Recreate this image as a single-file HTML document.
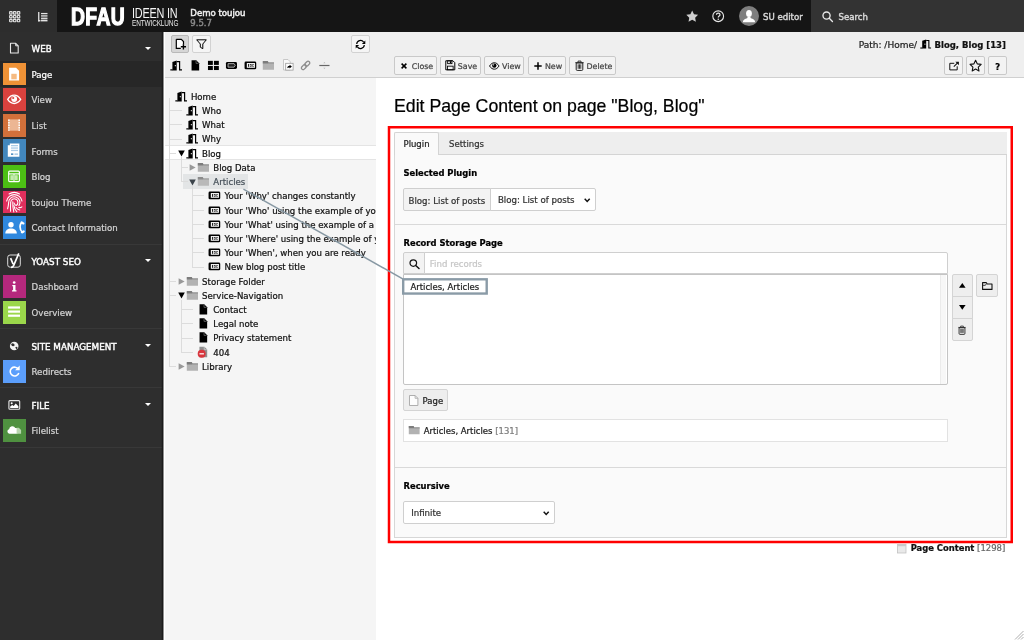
<!DOCTYPE html>
<html lang="en">
<head>
<meta charset="utf-8">
<title>Edit Page Content on page "Blog, Blog"</title>
<style>
*{box-sizing:border-box;margin:0;padding:0}
html,body{width:1024px;height:640px;overflow:hidden;background:#fff}
body{-webkit-text-stroke:0.22px;font-family:"DejaVu Sans","Liberation Sans",sans-serif;font-size:8.5px;color:#1a1a1a;position:relative;line-height:1}
#root{position:absolute;left:0;top:0;width:1024px;height:640px;overflow:hidden;will-change:transform}
.abs{position:absolute}
svg{display:block;position:absolute;overflow:visible}
b,.b{font-weight:bold;font-size:8.4px}
/* topbar */
#topbar{position:absolute;left:0;top:0;width:1024px;height:32px;background:#151515}
#tb-left{position:absolute;left:0;top:0;width:57px;height:32px;background:#2d2d2d}
#tb-search{position:absolute;left:811px;top:0;width:213px;height:32px;background:#333}
.t{position:absolute;white-space:nowrap;line-height:12px;height:12px}
/* module menu */
#menu{position:absolute;left:0;top:32px;width:162px;height:608px;background:#2e2e2e}
#menu-edge{position:absolute;left:162px;top:32px;width:2px;height:608px;background:#232323}
.mi{position:absolute;left:3px;width:22.9px;height:22.9px}
.ml{margin-top:.7px;font-size:8.65px;position:absolute;left:31.5px;color:#d4d4d4;white-space:nowrap;line-height:12px;height:12px}
.mh{margin-top:1.1px;position:absolute;left:31.5px;color:#fff;font-size:8.78px;-webkit-text-stroke:.4px;white-space:nowrap;line-height:12px;height:12px}
.sep{position:absolute;left:0;width:162px;height:1px;background:#383838}
.caret{position:absolute;left:145px;width:0;height:0;border-left:3.2px solid transparent;border-right:3.2px solid transparent;border-top:3.6px solid #fff}
/* tree */
#tree{position:absolute;left:164px;top:32px;width:212px;height:608px;background:#f5f5f5;overflow:hidden}
#tree-tb{position:absolute;left:0;top:0;width:212px;height:46px;background:#efefef;border-bottom:1px solid #d0d0d0}
.btn{position:absolute;border:1px solid #cfcfcf;background:#f3f3f3;border-radius:2px}
.tn{margin-top:.7px;font-size:8.58px;position:absolute;white-space:nowrap;line-height:12px;height:12px;color:#111}
/* content */
#doch{position:absolute;left:376px;top:32px;width:648px;height:46px;background:#efefef;border-bottom:1px solid #d0d0d0}
.dbtn{position:absolute;top:24px;height:19px;border:1px solid #c9c9c9;background:#f3f3f3;border-radius:2px;color:#444;font-size:7.9px}
.dbtn span{position:absolute;top:3.7px;line-height:12px;white-space:nowrap}
h1{position:absolute;left:394px;top:94px;font-family:"Liberation Sans",sans-serif;font-weight:normal;font-size:17.7px;line-height:24px;color:#000;white-space:nowrap}

#frame{position:absolute;left:387.7px;top:126px;width:625.3px;height:417.3px;border:2.5px solid #ff0000}
#tabbar{position:absolute;left:394.4px;top:132px;width:612.5px;height:22.5px;background:#eeeeee;border-bottom:1px solid #d4d4d4}
#tab1{position:absolute;left:394.4px;top:132px;width:44.2px;height:22.5px;background:#fafafa;border:1px solid #d4d4d4;border-bottom:none;border-radius:2px 2px 0 0}
#panel{position:absolute;left:394.4px;top:154.5px;width:612.5px;height:383px;background:#fafafa;border:1px solid #d7d7d7;border-top:none}
.hr{position:absolute;left:395.4px;width:610.5px;height:1px;background:#d9d9d9}
.lbl{margin-top:.6px;position:absolute;left:403.5px;font-weight:bold;font-size:8.4px;color:#000;white-space:nowrap;line-height:12px;height:12px}
.box{position:absolute;border:1px solid #cfcfcf;background:#fff}
.sbtn{position:absolute;border:1px solid #d4d4d4;background:#eeeeee}
</style>
</head>
<body>
<div id="root">
<!-- TOPBAR -->
<div id="topbar">
  <div id="tb-left">
    <svg style="left:8.8px;top:10.6px" width="11.4" height="11.4" viewBox="0 0 16 16" fill="none" stroke="#dedede" stroke-width="1.7">
      <rect x="0.9" y="0.9" width="3.4" height="3.4" rx="0.6"/><rect x="6.3" y="0.9" width="3.4" height="3.4" rx="0.6"/><rect x="11.7" y="0.9" width="3.4" height="3.4" rx="0.6"/>
      <rect x="0.9" y="6.3" width="3.4" height="3.4" rx="0.6"/><rect x="6.3" y="6.3" width="3.4" height="3.4" rx="0.6"/><rect x="11.7" y="6.3" width="3.4" height="3.4" rx="0.6"/>
      <rect x="0.9" y="11.7" width="3.4" height="3.4" rx="0.6"/><rect x="6.3" y="11.7" width="3.4" height="3.4" rx="0.6"/><rect x="11.7" y="11.7" width="3.4" height="3.4" rx="0.6"/>
    </svg>
    <svg style="left:37.8px;top:11.9px" width="9.6" height="9.4" viewBox="0 0 16 16" fill="#e4e4e4">
      <rect x="0" y="0" width="2.2" height="16"/><rect x="0" y="13.6" width="4" height="2.4"/>
      <rect x="5" y="1.6" width="11" height="2.2"/><rect x="5" y="5.6" width="11" height="2.2"/><rect x="5" y="9.6" width="11" height="2.2"/><rect x="5" y="13" width="11" height="3"/>
    </svg>
  </div>
  <!-- logo -->
  <div class="t" style="left:70.5px;top:6px;height:22px;line-height:22px;font-family:'Liberation Sans',sans-serif;font-weight:bold;font-size:24.6px;color:#fff;letter-spacing:0.5px;-webkit-text-stroke:1.3px #fff;transform-origin:0 50%;transform:scaleX(0.785)">DFAU</div>
  <div class="t" style="left:131.5px;top:6.4px;height:14px;line-height:14px;font-family:'Liberation Sans',sans-serif;font-size:14.6px;-webkit-text-stroke:0;color:#f4f4f4;letter-spacing:-0.3px;transform-origin:0 50%;transform:scaleX(0.745)">IDEEN IN</div>
  <div class="t" style="left:131.5px;top:19px;height:9px;line-height:9px;font-family:'Liberation Sans',sans-serif;font-size:8.6px;-webkit-text-stroke:0;color:#e6e6e6;letter-spacing:-0.2px;transform-origin:0 50%;transform:scaleX(0.755)">ENTWICKLUNG</div>
  <div class="t" style="left:190.3px;top:6.8px;font-size:8.56px;-webkit-text-stroke:.5px;color:#ededed">Demo toujou</div>
  <div class="t" style="left:190.3px;top:17px;font-size:8.5px;-webkit-text-stroke:.45px;color:#8a8a8a">9.5.7</div>
  <!-- right icons -->
  <svg style="left:685.8px;top:10px" width="12.4" height="12.4" viewBox="0 0 24 24" fill="#cfcfcf"><path d="M12 .8l3.5 7.3 7.9 1.1-5.7 5.6 1.4 8L12 19l-7.1 3.800 1.4-8L.6 9.200l7.900-1.100z"/></svg>
  <svg style="left:712.2px;top:10.4px" width="12.4" height="12.4" viewBox="0 0 24 24" fill="none" stroke="#e6e6e6" stroke-width="2.2"><circle cx="12" cy="12" r="10.4"/><path d="M8.600 9.400c0-2 1.500-3.300 3.500-3.300s3.400 1.300 3.400 3c0 2.600-3.400 2.600-3.400 5.200" stroke-width="2.400" fill="none"/><circle cx="12.100" cy="17.800" r="1.500" fill="#e6e6e6" stroke="none"/></svg>
  <div class="abs" style="left:739px;top:6px;width:20px;height:20px;border-radius:50%;background:#7e7e7e;overflow:hidden">
    <svg style="left:0;top:0" width="20" height="20" viewBox="0 0 20 20" fill="#fff"><ellipse cx="10" cy="7.600" rx="2.900" ry="3.500"/><path d="M3.800 16.200c.3-2.500 2.200-3.300 4.300-3.900l.6-1.300h2.600l.6 1.300c2.100.6 4 1.400 4.300 3.900z"/></svg>
  </div>
  <div class="t" style="left:763px;top:10.500px;color:#d6d6d6;font-size:8.580px;-webkit-text-stroke:.45px">SU editor</div>
  <div id="tb-search">
    <svg style="left:11px;top:11px" width="11" height="11" viewBox="0 0 16 16" fill="none" stroke="#e8e8e8" stroke-width="2"><circle cx="6.600" cy="6.600" r="5.200"/><path d="M10.600 10.600l4.600 4.600" stroke-linecap="round"/></svg>
    <div class="t" style="left:27.500px;top:10.500px;color:#d6d6d6;font-size:8.590px;-webkit-text-stroke:.45px">Search</div>
  </div>
</div>
<!-- MENU -->
<div id="menu">
<svg style="left:0;top:6.3px" width="30" height="20" viewBox="0 0 30 20"><path d="M10.500 5.300h5.200l2.500 2.500v7.200h-7.700z" fill="none" stroke="#e8e8e8" stroke-width="1.100" stroke-linejoin="round"/><path d="M15.700 5.300v2.500h2.500" fill="none" stroke="#e8e8e8" stroke-width="1"/></svg>
<div class="mh" style="top:10.1px">WEB</div>
<div class="caret" style="top:14.7px"></div>
<div class="abs" style="left:0;top:29.1px;width:162px;height:25.6px;background:#272727"></div>
<div class="mi" style="top:30.5px;background:#ef9236"><svg style="left:0;top:0" width="22.9" height="22.9" viewBox="0 0 22.9 22.9"><path d="M6.100 4.800h7l3 3v9.700h-10z" fill="#fff"/><rect x="8.300" y="10.800" width="5.400" height="5.500" fill="#f6bb82"/></svg></div>
<div class="ml" style="top:36.1px;color:#fff">Page</div>
<div class="mi" style="top:56.1px;background:#d9423e"><svg style="left:0;top:0" width="22.9" height="22.9" viewBox="0 0 22.9 22.9"><path d="M4.700 11.400c2-3.100 4.200-4.200 6.500-4.200s4.500 1.100 6.500 4.200c-2 3-4.200 4.100-6.500 4.100s-4.500-1.100-6.500-4.100z" fill="none" stroke="#fff" stroke-width="1.300"/><circle cx="11.200" cy="11" r="2.900" fill="#fff"/><circle cx="10.200" cy="10" r="1.100" fill="#d9423e"/></svg></div>
<div class="ml" style="top:61.7px">View</div>
<div class="mi" style="top:81.7px;background:#d2703a"><svg style="left:0;top:0" width="22.9" height="22.9" viewBox="0 0 22.9 22.9"><rect x="5.100" y="5.400" width="11.900" height="11.300" fill="#ecb693"/><path d="M5.900 5.400v11.300M16.200 5.400v11.300" stroke="#fff" stroke-width="1.500" stroke-dasharray="1.500 1"/></svg></div>
<div class="ml" style="top:87.3px">List</div>
<div class="mi" style="top:107.3px;background:#4287bd"><svg style="left:0;top:0" width="22.9" height="22.9" viewBox="0 0 22.9 22.9"><path d="M4.800 6.200h2v-1.700h9.600v13.200h-11.600z" fill="#fff"/><rect x="8" y="6" width="7" height="1.300" fill="#a9cbe6"/><rect x="8" y="8.400" width="7" height="1.300" fill="#a9cbe6"/><rect x="8" y="10.800" width="7" height="1.300" fill="#a9cbe6"/><rect x="8" y="14.400" width="2.300" height="1.500" fill="#4287bd"/><rect x="11.500" y="14.400" width="3.500" height="1.500" fill="#a9cbe6"/></svg></div>
<div class="ml" style="top:112.9px">Forms</div>
<div class="mi" style="top:132.9px;background:#4cbf14"><svg style="left:0;top:0" width="22.9" height="22.9" viewBox="0 0 22.9 22.9"><rect x="5.700" y="6.100" width="10.700" height="10.500" rx="1" fill="none" stroke="#fff" stroke-width="1.200"/><path d="M5.700 8.900h10.700" stroke="#fff" stroke-width="1.200"/><rect x="7.300" y="10.200" width="3" height="5" fill="#c4ecae"/><rect x="11.700" y="10.200" width="3" height="5" fill="#c4ecae"/><path d="M11 9v7.500" stroke="#fff" stroke-width="1"/></svg></div>
<div class="ml" style="top:138.5px">Blog</div>
<div class="mi" style="top:158.5px;background:#e02f5d"><svg style="left:0;top:0" width="22.9" height="22.9" viewBox="0 0 22.9 22.9"><g fill="none" stroke="#fff" stroke-width="1.050" stroke-linecap="round"><path d="M6.05 3.00A9.90 9.90 0 0 1 16.55 3.00"/><path d="M3.62 10.05A7.80 7.80 0 0 1 18.98 10.05"/><path d="M4.600 17.800Q5.42 14.90 5.62 11.90A5.70 5.70 0 1 1 15.97 14.67"/><path d="M7.600 20.200Q7.40 15.40 7.70 11.40A3.60 3.60 0 1 1 13.10 14.52Q11.50 14.00 11.00 12.00"/><path d="M10.800 21Q9.60 15.85 9.80 10.85"/><path d="M13.800 20.600Q11.300 18 10.900 14.600"/><path d="M16.800 19Q14.300 18.700 13 16.600"/><path d="M18.900 15.900Q17.500 17 15.800 16.500"/></g></svg></div>
<div class="ml" style="top:164.1px">toujou Theme</div>
<div class="mi" style="top:184.1px;background:#2f88de"><svg style="left:0;top:0" width="22.9" height="22.9" viewBox="0 0 22.9 22.9"><circle cx="8" cy="8.700" r="2.700" fill="#fff"/><path d="M2.300 17.400c0-3.400 2.400-5 5.700-5s5.800 1.600 5.800 5z" fill="#fff"/><path d="M19.200 6.600c-2.600 1.200-3.300 6.500.4 9.900" fill="none" stroke="#fff" stroke-width="1.700" stroke-linecap="round"/><path d="M18.600 6.500l1.800.9M18.900 16.200l1.800-.800" stroke="#fff" stroke-width="2.200" stroke-linecap="round"/></svg></div>
<div class="ml" style="top:189.7px">Contact Information</div>
<div class="sep" style="top:212.3px"></div>
<svg style="left:0;top:219.0px" width="30" height="20" viewBox="0 0 30 20"><rect x="7.700" y="4" width="12.600" height="12.200" rx="2.400" fill="none" stroke="#dcdcdc" stroke-width="1"/><path d="M10.600 7.200l2.500 5.900M18.800 2.400l-5.200 12.200c-.5 1.200-1.200 1.800-2.600 1.800" fill="none" stroke="#fff" stroke-width="1.700"/></svg>
<div class="mh" style="top:222.8px">YOAST SEO</div>
<div class="caret" style="top:227.4px"></div>
<div class="mi" style="top:243.1px;background:#b5287d"><svg style="left:0;top:0" width="22.9" height="22.9" viewBox="0 0 22.9 22.9"><circle cx="11.200" cy="7.500" r="1.350" fill="#fff"/><path d="M9.300 10h3.200v5.300h1v1.300h-4.500v-1.300h1.100v-4h-.8z" fill="#fff"/></svg></div>
<div class="ml" style="top:248.7px">Dashboard</div>
<div class="mi" style="top:268.9px;background:#9bd74b"><svg style="left:0;top:0" width="22.9" height="22.9" viewBox="0 0 22.9 22.9"><rect x="5.100" y="5.400" width="11.900" height="2.200" fill="#fff"/><rect x="5.100" y="9.500" width="11.900" height="2.200" fill="#fff"/><rect x="5.100" y="13.600" width="11.900" height="2.200" fill="#fff"/></svg></div>
<div class="ml" style="top:274.5px">Overview</div>
<div class="sep" style="top:296px"></div>
<svg style="left:0;top:304.0px" width="30" height="20" viewBox="0 0 30 20"><circle cx="14.200" cy="10" r="4.300" fill="#f2f2f2"/><path d="M12 7.200l2 .6.800 1.500-1.300 1-1.500-.3-.9-1.500zM15.200 11.300l1.700-.6.700 1-1.200 1.800z" fill="#2e2e2e"/></svg>
<div class="mh" style="top:307.8px">SITE MANAGEMENT</div>
<div class="caret" style="top:312.4px"></div>
<div class="mi" style="top:328.1px;background:#5b9efb"><svg style="left:0;top:0" width="22.9" height="22.9" viewBox="0 0 22.9 22.9"><path d="M15.400 9.300a4.400 4.400 0 1 0 .4 3.600" fill="none" stroke="#fff" stroke-width="1.600"/><path d="M16.700 5.600v4.600h-4.600z" fill="#fff"/></svg></div>
<div class="ml" style="top:333.7px">Redirects</div>
<div class="sep" style="top:355.4px"></div>
<svg style="left:0;top:362.8px" width="30" height="20" viewBox="0 0 30 20"><rect x="8.900" y="5.600" width="10.800" height="8.600" rx="1" fill="none" stroke="#e8e8e8" stroke-width="1.100"/><circle cx="11.700" cy="8.300" r="1" fill="#fff"/><path d="M10.200 13v-1.600l2-1.500 1.500 1 2-2.500 2.700 2.800v1.800z" fill="#fff"/></svg>
<div class="mh" style="top:366.6px">FILE</div>
<div class="caret" style="top:371.2px"></div>
<div class="mi" style="top:387.1px;background:#4f9140"><svg style="left:0;top:0" width="22.9" height="22.9" viewBox="0 0 22.9 22.9"><path d="M6.400 14.700a2.300 2.300 0 0 1-.3-4.500 3.300 3.300 0 0 1 6.200-1.200 2.900 2.900 0 0 1 1.200 5.700z" fill="#fff"/><path d="M13.600 8.800h2.200l2.300 2.300v3.600h-4.500z" fill="#b7d6ae"/></svg></div>
<div class="ml" style="top:392.7px">Filelist</div>
<div class="sep" style="top:415.2px"></div>
</div>
<div id="menu-edge"></div>
<!-- TREE -->
<div id="tree">
<div id="tree-tb">
<div class="btn" style="left:7.0px;top:3.1px;width:17.9px;height:17.9px;background:#d6d6d6;border-color:#b9b9b9"></div>
<svg style="left:10.6px;top:6.4px" width="12" height="12" viewBox="0 0 12 12"><path d="M1.300 1.300h5l2.200 2.200v6.900h-7.200z" fill="#fff"/><path d="M1.300 1.300h5l2.200 2.200v3M5.800 10.400h-4.500v-9.100" fill="none" stroke="#000" stroke-width="1.200"/><path d="M8.400 6.200v5.200M5.800 8.800h5.200" stroke="#000" stroke-width="1.400"/></svg>
<div class="btn" style="left:28.3px;top:3.1px;width:18.7px;height:17.9px;background:#f5f5f5;border-color:#d2d2d2"></div>
<svg style="left:31.9px;top:6.6px" width="11" height="11" viewBox="0 0 11 11"><path d="M.7 .800h9.600l-3.500 4.200v4.700l-2.500-1.500v-3.200z" fill="none" stroke="#000" stroke-width="1" stroke-linejoin="round"/></svg>
<div class="btn" style="left:187.3px;top:3.1px;width:18.3px;height:17.9px;background:#f5f5f5;border-color:#d2d2d2"></div>
<svg style="left:191.0px;top:6.6px" width="11" height="11" viewBox="0 0 11 11"><path d="M1.700 5a3.800 3.800 0 0 1 6.900-1.900M9.300 6a3.800 3.800 0 0 1-6.900 1.900" fill="none" stroke="#000" stroke-width="1.200"/><path d="M10.300 1.600v3.400h-3.400zM.7 9.400v-3.400h3.400z" fill="#000"/></svg>
<svg style="left:6.3px;top:27.1px" width="12.800" height="12.800" viewBox="0 0 16 16"><path d="M3 3.700l5.400-1.800v12.400h-5.400z" fill="#000"/><circle cx="6.700" cy="8.400" r=".8" fill="#e8e8e8"/><path d="M8.400 3.300h3.600v10.300h3" fill="none" stroke="#000" stroke-width="1.500"/><path d="M.4 13.600h3" stroke="#000" stroke-width="1.500"/></svg>
<svg style="left:24.6px;top:27.1px" width="12.800" height="12.800" viewBox="0 0 16 16"><path d="M3.200 1.600h5.900l3.600 3.600v9.100h-9.500z" fill="#000"/><path d="M8.800 2.300v3.200h3.200" fill="none" stroke="#777" stroke-width=".9"/></svg>
<svg style="left:42.9px;top:27.1px" width="12.800" height="12.800" viewBox="0 0 16 16"><rect x="1.200" y="2.300" width="6.100" height="5.100" fill="#000"/><rect x="8.700" y="2.300" width="6.100" height="5.100" fill="#000"/><rect x="1.200" y="8.700" width="6.100" height="5.100" fill="#000"/><rect x="8.700" y="8.700" width="6.100" height="5.100" fill="#000"/></svg>
<svg style="left:61.3px;top:27.1px" width="12.800" height="12.800" viewBox="0 0 16 16"><rect x="1.200" y="3.600" width="13.800" height="8.800" rx="1.800" fill="#000"/><path d="M3.800 5.800h7.600l1.400 2.200-1.400 2.200h-7.600z" fill="#222" stroke="#dcdcdc" stroke-width=".9"/></svg>
<svg style="left:79.9px;top:27.1px" width="12.800" height="12.800" viewBox="0 0 16 16"><rect x=".7" y="3.200" width="14.600" height="9.600" rx="1.700" fill="#000"/><rect x="3.500" y="5" width="10.200" height="6" fill="#f4f4f4"/><path d="M5.700 6.200v3.600M7.300 7h1.400M7.300 9h1.400M10 6.200v3.600M11.600 6.400v1M11.600 8.600v1" stroke="#000" stroke-width="1.100"/></svg>
<svg style="left:98.3px;top:27.1px" width="12.800" height="12.800" viewBox="0 0 16 16"><path d="M1 2.700h6l.9 1.500h7.100v9.100h-14z" fill="#b2b2b2"/><path d="M1 2.500h6.200l.9 1.700v1.300h-7.100z" fill="#7c7c7c"/><path d="M8 4.200h7v1.800h-7z" fill="#9c9c9c"/></svg>
<svg style="left:118.6px;top:27.3px" width="11" height="12" viewBox="0 0 11 12"><path d="M.5 .500h4.500l2.300 2.300v8.200h-6.800z" fill="#fafafa" stroke="#bdbdbd" stroke-width=".8"/><rect x="2.700" y="4.300" width="7.400" height="6.800" fill="#fff" stroke="#9a9a9a" stroke-width=".8"/><path d="M4.300 9.300c0-1.700.9-2.500 2.300-2.500v-1.100l2.300 1.900-2.300 1.900v-1.100c-1 0-1.700.2-2.300.9z" fill="#000"/></svg>
<svg style="left:136.4px;top:27.8px" width="11" height="11" viewBox="0 0 11 11"><g fill="none" stroke="#8c8c8c" stroke-width="1.300"><rect x="-2.400" y="-1.700" width="5.600" height="3.400" rx="1.700" transform="translate(3.600,7.400) rotate(-45)"/><rect x="-2.400" y="-1.700" width="5.600" height="3.400" rx="1.700" transform="translate(7,4) rotate(-45)"/></g></svg>
<svg style="left:154.9px;top:27.8px" width="11" height="11" viewBox="0 0 11 11"><path d="M.3 5.500h10.200" stroke="#666" stroke-width="1.200"/><path d="M4.300 3.300l1.100-1.300 1.100 1.300zM4.300 7.700l1.100 1.300 1.100-1.300z" fill="#b5b5b5"/></svg>
</div>
<div class="abs" style="left:0;top:113px;width:212px;height:15px;background:#fff;border-top:1px solid #e4e4e4;border-bottom:1px solid #e4e4e4"></div>
<div class="abs" style="left:19.4px;top:142.1px;width:64.600px;height:15px;background:#e3e5e6"></div>
<div class="abs" style="left:5.3px;top:66.4px;width:1px;height:268.7px;background:#dcdcdc"></div>
<div class="abs" style="left:5.3px;top:78.1px;width:12.3px;height:1px;background:#dcdcdc"></div>
<div class="abs" style="left:5.3px;top:92.3px;width:12.3px;height:1px;background:#dcdcdc"></div>
<div class="abs" style="left:5.3px;top:106.6px;width:12.3px;height:1px;background:#dcdcdc"></div>
<div class="abs" style="left:5.3px;top:120.8px;width:7.0px;height:1px;background:#dcdcdc"></div>
<div class="abs" style="left:5.3px;top:248.8px;width:7.0px;height:1px;background:#dcdcdc"></div>
<div class="abs" style="left:5.3px;top:263.0px;width:7.0px;height:1px;background:#dcdcdc"></div>
<div class="abs" style="left:5.3px;top:334.1px;width:7.0px;height:1px;background:#dcdcdc"></div>
<div class="abs" style="left:16.9px;top:125.3px;width:1px;height:24.9px;background:#dcdcdc"></div>
<div class="abs" style="left:16.9px;top:135.0px;width:7.0px;height:1px;background:#dcdcdc"></div>
<div class="abs" style="left:16.9px;top:149.2px;width:7.0px;height:1px;background:#dcdcdc"></div>
<div class="abs" style="left:16.9px;top:267.5px;width:1px;height:53.4px;background:#dcdcdc"></div>
<div class="abs" style="left:16.9px;top:277.2px;width:12.3px;height:1px;background:#dcdcdc"></div>
<div class="abs" style="left:16.9px;top:291.4px;width:12.3px;height:1px;background:#dcdcdc"></div>
<div class="abs" style="left:16.9px;top:305.6px;width:12.3px;height:1px;background:#dcdcdc"></div>
<div class="abs" style="left:16.9px;top:319.9px;width:12.3px;height:1px;background:#dcdcdc"></div>
<div class="abs" style="left:28.1px;top:153.7px;width:1px;height:81.8px;background:#dcdcdc"></div>
<div class="abs" style="left:28.1px;top:163.4px;width:12.3px;height:1px;background:#dcdcdc"></div>
<div class="abs" style="left:28.1px;top:177.7px;width:12.3px;height:1px;background:#dcdcdc"></div>
<div class="abs" style="left:28.1px;top:191.9px;width:12.3px;height:1px;background:#dcdcdc"></div>
<div class="abs" style="left:28.1px;top:206.1px;width:12.3px;height:1px;background:#dcdcdc"></div>
<div class="abs" style="left:28.1px;top:220.3px;width:12.3px;height:1px;background:#dcdcdc"></div>
<div class="abs" style="left:28.1px;top:234.5px;width:12.3px;height:1px;background:#dcdcdc"></div>
<svg style="left:11.2px;top:57.7px" width="12.800" height="12.800" viewBox="0 0 16 16"><path d="M3 3.700l5.400-1.800v12.400h-5.400z" fill="#000"/><circle cx="6.700" cy="8.400" r=".8" fill="#e8e8e8"/><path d="M8.400 3.300h3.600v10.300h3" fill="none" stroke="#000" stroke-width="1.500"/><path d="M.4 13.600h3" stroke="#000" stroke-width="1.500"/></svg>
<div class="tn" style="left:26.9px;top:58.1px">Home</div>
<svg style="left:21.6px;top:71.9px" width="12.800" height="12.800" viewBox="0 0 16 16"><path d="M3 3.700l5.400-1.800v12.400h-5.400z" fill="#000"/><circle cx="6.700" cy="8.400" r=".8" fill="#e8e8e8"/><path d="M8.400 3.300h3.600v10.300h3" fill="none" stroke="#000" stroke-width="1.500"/><path d="M.4 13.600h3" stroke="#000" stroke-width="1.500"/></svg>
<div class="tn" style="left:38.1px;top:72.3px">Who</div>
<svg style="left:21.6px;top:86.1px" width="12.800" height="12.800" viewBox="0 0 16 16"><path d="M3 3.700l5.400-1.800v12.400h-5.400z" fill="#000"/><circle cx="6.700" cy="8.400" r=".8" fill="#e8e8e8"/><path d="M8.400 3.300h3.600v10.300h3" fill="none" stroke="#000" stroke-width="1.500"/><path d="M.4 13.600h3" stroke="#000" stroke-width="1.500"/></svg>
<div class="tn" style="left:38.1px;top:86.5px">What</div>
<svg style="left:21.6px;top:100.4px" width="12.800" height="12.800" viewBox="0 0 16 16"><path d="M3 3.700l5.400-1.800v12.400h-5.400z" fill="#000"/><circle cx="6.700" cy="8.400" r=".8" fill="#e8e8e8"/><path d="M8.400 3.300h3.600v10.300h3" fill="none" stroke="#000" stroke-width="1.500"/><path d="M.4 13.600h3" stroke="#000" stroke-width="1.500"/></svg>
<div class="tn" style="left:38.1px;top:100.8px">Why</div>
<svg style="left:13.5px;top:118.1px" width="7" height="7" viewBox="0 0 7 7"><path d="M.2 .600h6.600l-3.300 6z" fill="#000"/></svg>
<svg style="left:21.6px;top:114.6px" width="12.800" height="12.800" viewBox="0 0 16 16"><path d="M3 3.700l5.400-1.800v12.400h-5.400z" fill="#000"/><circle cx="6.700" cy="8.400" r=".8" fill="#e8e8e8"/><path d="M8.400 3.300h3.600v10.300h3" fill="none" stroke="#000" stroke-width="1.500"/><path d="M.4 13.600h3" stroke="#000" stroke-width="1.500"/></svg>
<div class="tn" style="left:38.1px;top:115.0px">Blog</div>
<svg style="left:25.1px;top:132.0px" width="7" height="7" viewBox="0 0 7 7"><path d="M.6 .200v6.600l6-3.300z" fill="#999"/></svg>
<svg style="left:32.8px;top:128.8px" width="12.800" height="12.800" viewBox="0 0 16 16"><path d="M1 2.700h6l.9 1.500h7.100v9.100h-14z" fill="#b2b2b2"/><path d="M1 2.500h6.200l.9 1.700v1.300h-7.100z" fill="#7c7c7c"/><path d="M8 4.200h7v1.800h-7z" fill="#9c9c9c"/></svg>
<div class="tn" style="left:49.3px;top:129.2px">Blog Data</div>
<svg style="left:24.7px;top:146.5px" width="7" height="7" viewBox="0 0 7 7"><path d="M.2 .600h6.600l-3.300 6z" fill="#3c444b"/></svg>
<svg style="left:32.8px;top:143.0px" width="12.800" height="12.800" opacity=".85" viewBox="0 0 16 16"><path d="M1 2.700h6l.9 1.500h7.100v9.100h-14z" fill="#b2b2b2"/><path d="M1 2.500h6.200l.9 1.700v1.300h-7.100z" fill="#7c7c7c"/><path d="M8 4.200h7v1.800h-7z" fill="#9c9c9c"/></svg>
<div class="tn" style="left:49.3px;top:143.4px;color:#48525b">Articles</div>
<svg style="left:44.0px;top:157.2px" width="12.800" height="12.800" viewBox="0 0 16 16"><rect x=".7" y="3.200" width="14.600" height="9.600" rx="1.700" fill="#000"/><rect x="3.500" y="5" width="10.200" height="6" fill="#f4f4f4"/><path d="M5.700 6.200v3.600M7.300 7h1.400M7.300 9h1.400M10 6.200v3.600M11.600 6.400v1M11.600 8.600v1" stroke="#000" stroke-width="1.100"/></svg>
<div class="tn" style="left:60.5px;top:157.6px">Your 'Why' changes constantly</div>
<svg style="left:44.0px;top:171.5px" width="12.800" height="12.800" viewBox="0 0 16 16"><rect x=".7" y="3.200" width="14.600" height="9.600" rx="1.700" fill="#000"/><rect x="3.500" y="5" width="10.200" height="6" fill="#f4f4f4"/><path d="M5.700 6.200v3.600M7.300 7h1.400M7.300 9h1.400M10 6.200v3.600M11.600 6.400v1M11.600 8.600v1" stroke="#000" stroke-width="1.100"/></svg>
<div class="tn" style="left:60.5px;top:171.9px">Your 'Who' using the example of your</div>
<svg style="left:44.0px;top:185.7px" width="12.800" height="12.800" viewBox="0 0 16 16"><rect x=".7" y="3.200" width="14.600" height="9.600" rx="1.700" fill="#000"/><rect x="3.500" y="5" width="10.200" height="6" fill="#f4f4f4"/><path d="M5.700 6.200v3.600M7.300 7h1.400M7.300 9h1.400M10 6.200v3.600M11.600 6.400v1M11.600 8.600v1" stroke="#000" stroke-width="1.100"/></svg>
<div class="tn" style="left:60.5px;top:186.1px">Your 'What' using the example of a</div>
<svg style="left:44.0px;top:199.9px" width="12.800" height="12.800" viewBox="0 0 16 16"><rect x=".7" y="3.200" width="14.600" height="9.600" rx="1.700" fill="#000"/><rect x="3.500" y="5" width="10.200" height="6" fill="#f4f4f4"/><path d="M5.700 6.200v3.600M7.300 7h1.400M7.300 9h1.400M10 6.200v3.600M11.600 6.400v1M11.600 8.600v1" stroke="#000" stroke-width="1.100"/></svg>
<div class="tn" style="left:60.5px;top:200.3px">Your 'Where' using the example of your</div>
<svg style="left:44.0px;top:214.1px" width="12.800" height="12.800" viewBox="0 0 16 16"><rect x=".7" y="3.200" width="14.600" height="9.600" rx="1.700" fill="#000"/><rect x="3.500" y="5" width="10.200" height="6" fill="#f4f4f4"/><path d="M5.700 6.200v3.600M7.300 7h1.400M7.300 9h1.400M10 6.200v3.600M11.600 6.400v1M11.600 8.600v1" stroke="#000" stroke-width="1.100"/></svg>
<div class="tn" style="left:60.5px;top:214.5px">Your 'When', when you are ready</div>
<svg style="left:44.0px;top:228.3px" width="12.800" height="12.800" viewBox="0 0 16 16"><rect x=".7" y="3.200" width="14.600" height="9.600" rx="1.700" fill="#000"/><rect x="3.500" y="5" width="10.200" height="6" fill="#f4f4f4"/><path d="M5.700 6.200v3.600M7.300 7h1.400M7.300 9h1.400M10 6.200v3.600M11.600 6.400v1M11.600 8.600v1" stroke="#000" stroke-width="1.100"/></svg>
<div class="tn" style="left:60.5px;top:228.7px">New blog post title</div>
<svg style="left:13.9px;top:245.8px" width="7" height="7" viewBox="0 0 7 7"><path d="M.6 .200v6.600l6-3.300z" fill="#999"/></svg>
<svg style="left:21.6px;top:242.6px" width="12.800" height="12.800" viewBox="0 0 16 16"><path d="M1 2.700h6l.9 1.500h7.100v9.100h-14z" fill="#b2b2b2"/><path d="M1 2.500h6.200l.9 1.700v1.300h-7.100z" fill="#7c7c7c"/><path d="M8 4.200h7v1.800h-7z" fill="#9c9c9c"/></svg>
<div class="tn" style="left:38.1px;top:243.0px">Storage Folder</div>
<svg style="left:13.5px;top:260.3px" width="7" height="7" viewBox="0 0 7 7"><path d="M.2 .600h6.600l-3.300 6z" fill="#000"/></svg>
<svg style="left:21.6px;top:256.8px" width="12.800" height="12.800" viewBox="0 0 16 16"><path d="M1 2.700h6l.9 1.500h7.100v9.100h-14z" fill="#b2b2b2"/><path d="M1 2.500h6.200l.9 1.700v1.300h-7.100z" fill="#7c7c7c"/><path d="M8 4.200h7v1.800h-7z" fill="#9c9c9c"/></svg>
<div class="tn" style="left:38.1px;top:257.2px">Service-Navigation</div>
<svg style="left:32.8px;top:271.0px" width="12.800" height="12.800" viewBox="0 0 16 16"><path d="M3.200 1.600h5.900l3.600 3.600v9.100h-9.500z" fill="#000"/><path d="M8.800 2.300v3.200h3.200" fill="none" stroke="#777" stroke-width=".9"/></svg>
<div class="tn" style="left:49.3px;top:271.4px">Contact</div>
<svg style="left:32.8px;top:285.2px" width="12.800" height="12.800" viewBox="0 0 16 16"><path d="M3.200 1.600h5.900l3.600 3.600v9.100h-9.500z" fill="#000"/><path d="M8.800 2.300v3.200h3.200" fill="none" stroke="#777" stroke-width=".9"/></svg>
<div class="tn" style="left:49.3px;top:285.6px">Legal note</div>
<svg style="left:32.8px;top:299.4px" width="12.800" height="12.800" viewBox="0 0 16 16"><path d="M3.200 1.600h5.900l3.600 3.600v9.100h-9.500z" fill="#000"/><path d="M8.800 2.300v3.200h3.200" fill="none" stroke="#777" stroke-width=".9"/></svg>
<div class="tn" style="left:49.3px;top:299.8px">Privacy statement</div>
<svg style="left:32.1px;top:313.8px" width="12.800" height="12.800" viewBox="0 0 16 16"><path d="M4.300 .800h6.200l3.500 3.500v9.700h-9.700z" fill="#8f8f8f"/><path d="M10.300 1.200v3.300h3.300" fill="none" stroke="#cfcfcf" stroke-width=".9"/><circle cx="7.100" cy="9.700" r="5" fill="#d8363d"/><rect x="4.300" y="8.900" width="5.600" height="1.700" fill="#fbe9ea"/></svg>
<div class="tn" style="left:49.3px;top:314.1px">404</div>
<svg style="left:13.9px;top:331.1px" width="7" height="7" viewBox="0 0 7 7"><path d="M.6 .200v6.600l6-3.300z" fill="#999"/></svg>
<svg style="left:21.6px;top:327.9px" width="12.800" height="12.800" viewBox="0 0 16 16"><path d="M1 2.700h6l.9 1.500h7.100v9.100h-14z" fill="#b2b2b2"/><path d="M1 2.500h6.200l.9 1.700v1.300h-7.100z" fill="#7c7c7c"/><path d="M8 4.200h7v1.800h-7z" fill="#9c9c9c"/></svg>
<div class="tn" style="left:38.1px;top:328.3px">Library</div>
</div>
<svg style="left:0;top:32px" width="170" height="608"><rect x="161.800" y="0" width="1.700" height="608" fill="#1b1b1b"/><rect x="163.500" y="0" width="1.600" height="608" fill="#ffffff"/></svg>
<!-- CONTENT -->
<div id="doch">
<div class="dbtn" style="left:18.2px;width:43.0px"><svg style="left:5.600px;top:5.700px" width="6" height="6" viewBox="0 0 6 6"><path d="M.6 .600l4.800 4.800M5.400 .600l-4.800 4.800" stroke="#000" stroke-width="1.500"/></svg><span style="left:16.5px">Close</span></div>
<div class="dbtn" style="left:64.2px;width:41.0px"><svg style="left:3.700px;top:3.200px" width="10.600" height="10.600" viewBox="0 0 16 16"><path d="M1.200 1.200h10.800l2.800 2.800v10.800h-13.600z" fill="none" stroke="#000" stroke-width="1.500" stroke-linejoin="round"/><rect x="4" y="1.200" width="6.500" height="4.300" fill="none" stroke="#000" stroke-width="1.300"/><rect x="7.300" y="1.800" width="2" height="2.800" fill="#000"/><rect x="3.700" y="9.300" width="8.600" height="5.500" fill="none" stroke="#000" stroke-width="1.300"/></svg><span style="left:16.6px">Save</span></div>
<div class="dbtn" style="left:108.4px;width:40.0px"><svg style="left:3.700px;top:4.500px" width="10.600" height="8" viewBox="0 0 16 12"><path d="M.8 6c2.200-3.600 4.700-4.900 7.200-4.900s5 1.300 7.200 4.900c-2.200 3.500-4.700 4.800-7.200 4.800s-5-1.300-7.200-4.800z" fill="none" stroke="#000" stroke-width="1.400"/><circle cx="8" cy="5.400" r="3.300" fill="#000"/><circle cx="6.800" cy="4.300" r="1.100" fill="#f3f3f3"/></svg><span style="left:16.6px">View</span></div>
<div class="dbtn" style="left:151.8px;width:38.2px"><svg style="left:5px;top:4.700px" width="8" height="8" viewBox="0 0 8 8"><path d="M4 .300v7.400M.3 4h7.400" stroke="#000" stroke-width="1.500"/></svg><span style="left:16.1px">New</span></div>
<div class="dbtn" style="left:193.1px;width:47.2px"><svg style="left:4.500px;top:3.300px" width="9" height="11" viewBox="0 0 9 11"><path d="M1.200 3h6.600v6.400a1 1 0 0 1-1 1h-4.600a1 1 0 0 1-1-1z" fill="none" stroke="#222" stroke-width="1"/><path d="M.3 2.600h8.400M3 2.400v-1.300h3v1.300M3.200 4.300v4.500M4.500 4.300v4.500M5.800 4.300v4.500" fill="none" stroke="#222" stroke-width=".9"/></svg><span style="left:16.4px">Delete</span></div>
<div class="t" style="left:482.7px;top:6.5px;font-size:9px;color:#222">Path: /Home/</div>
<svg style="left:543.8px;top:6.3px" width="11.800" height="11.800" viewBox="0 0 16 16"><path d="M3 3.700l5.400-1.800v12.400h-5.400z" fill="#000"/><circle cx="6.700" cy="8.400" r=".8" fill="#e8e8e8"/><path d="M8.400 3.300h3.600v10.300h3" fill="none" stroke="#000" stroke-width="1.500"/><path d="M.4 13.600h3" stroke="#000" stroke-width="1.500"/></svg>
<div class="t" style="left:558.5px;top:6.5px;font-weight:bold;font-size:8.500px;color:#111">Blog, Blog [13]</div>
<div class="dbtn" style="left:568.2px;width:19.1px"><svg style="left:3.400px;top:3.600px" width="10.500" height="10" viewBox="0 0 10.500 10"><path d="M5.300 2.300h-4.500v6.600h7.400v-3.600" fill="none" stroke="#111" stroke-width="1"/><path d="M4.800 5.700l4.400-4.400" stroke="#111" stroke-width="1.100"/><path d="M6.300 .700h3.600v3.600z" fill="#111"/></svg></div>
<div class="dbtn" style="left:590.2px;width:19.3px"><svg style="left:2.300px;top:2.200px" width="13.200" height="13.200" viewBox="0 0 24 24"><path d="M12 2.200l3 6.600 7.100.9-5.200 5 1.300 7.100-6.200-3.500-6.200 3.500 1.300-7.100-5.200-5 7.100-.900z" fill="none" stroke="#111" stroke-width="2" stroke-linejoin="round"/></svg></div>
<div class="dbtn" style="left:612.4px;width:18.9px"><span style="left:5.900px;font-weight:bold;font-size:8.400px;color:#000">?</span></div>
</div>
<h1>Edit Page Content on page "Blog, Blog"</h1>
<svg style="left:0;top:0" width="1024" height="640"><rect x="389" y="127.250" width="622.750" height="414.750" fill="none" stroke="#ff0000" stroke-width="2.500"/></svg>
<div id="tabbar"></div>
<div id="tab1"></div>
<div id="panel"></div>
<div class="t" style="left:403.5px;top:138.2px;color:#222">Plugin</div>
<div class="t" style="left:449.1px;top:138.2px;color:#333">Settings</div>
<div class="lbl" style="top:166.400px">Selected Plugin</div>
<div class="box" style="left:403px;top:188px;width:87.900px;height:22.700px;background:#f3f3f3;border-radius:2px 0 0 2px"></div>
<div class="box" style="left:489.900px;top:188px;width:105.800px;height:22.700px;border-radius:0 2px 2px 0"></div>
<div class="t" style="left:408.500px;top:195px;font-size:8.650px;color:#333">Blog: List of posts</div>
<div class="t" style="left:497.900px;top:194.200px;font-size:8.650px;color:#333">Blog: List of posts</div>
<svg style="left:583.600px;top:197.600px" width="6.400" height="4.600" viewBox="0 0 6.400 4.600"><path d="M.7 .800l2.500 2.600 2.500-2.600" fill="none" stroke="#111" stroke-width="1.500"/></svg>
<div class="hr" style="top:223.700px"></div>
<div class="lbl" style="top:236.100px">Record Storage Page</div>
<div class="box" style="left:403px;top:251.900px;width:22px;height:22.100px;background:#f3f3f3;border-radius:2px 0 0 0"></div>
<div class="box" style="left:424px;top:251.900px;width:523.500px;height:22.100px;border-radius:0 2px 0 0"></div>
<svg style="left:409px;top:258.600px" width="11" height="10" viewBox="0 0 11 10"><circle cx="4.300" cy="4.100" r="3.300" fill="none" stroke="#111" stroke-width="1.200"/><path d="M6.700 6.500l3.300 3" stroke="#111" stroke-width="1.500" stroke-linecap="round"/></svg>
<div class="t" style="left:429.800px;top:257.500px;font-size:8.600px;color:#c6c6c6">Find records</div>
<div class="box" style="left:403px;top:273.600px;width:544.500px;height:111.200px;border-color:#c4c4c4;border-radius:0 0 2px 2px"></div>
<div class="abs" style="left:939.800px;top:274.600px;width:6.700px;height:109.200px;background:#f7f7f7;border-left:1px solid #ebebeb"></div>
<svg style="left:0;top:0" width="1024" height="640"><rect x="403.200" y="279.300" width="83.500" height="14.250" fill="#fff" stroke="#8a9ba7" stroke-width="2.400"/></svg>
<div class="t" style="left:410.400px;top:280.700px;color:#222">Articles, Articles</div>
<svg style="left:0;top:0" width="1024" height="640"><path d="M243.400 189.100L402.700 278.800" stroke="#8798a3" stroke-width="1.500" fill="none"/></svg>
<div class="sbtn" style="left:951.600px;top:274.400px;width:21px;height:22.400px;border-radius:2px 2px 0 0"></div>
<div class="sbtn" style="left:951.600px;top:296.300px;width:21px;height:22.400px"></div>
<div class="sbtn" style="left:951.600px;top:318.200px;width:21px;height:22.800px;border-radius:0 0 2px 2px"></div>
<div class="sbtn" style="left:976.300px;top:274.400px;width:21.400px;height:22.500px;border-radius:2px"></div>
<svg style="left:958.900px;top:283.300px" width="6.600" height="4.800" viewBox="0 0 6.600 4.800"><path d="M0 4.800h6.600l-3.300-4.800z" fill="#000"/></svg>
<svg style="left:958.900px;top:305.400px" width="6.600" height="4.800" viewBox="0 0 6.600 4.800"><path d="M0 0h6.600l-3.300 4.800z" fill="#000"/></svg>
<svg style="left:958.300px;top:324.700px" width="8" height="10" viewBox="0 0 9 11"><path d="M1.200 3h6.600v6.400a1 1 0 0 1-1 1h-4.600a1 1 0 0 1-1-1z" fill="none" stroke="#222" stroke-width="1"/><path d="M.3 2.600h8.400M3 2.400v-1.300h3v1.300M3.200 4.300v4.500M4.500 4.300v4.500M5.800 4.300v4.500" fill="none" stroke="#222" stroke-width=".9"/></svg>
<svg style="left:981.700px;top:282px" width="10.600" height="8" viewBox="0 0 10.600 8"><path d="M.6 .600h3.600l1 1.400h4.800v5.400h-9.400z" fill="none" stroke="#111" stroke-width="1.100" stroke-linejoin="round"/><path d="M.6 3.300h2.800l.8-1.300" fill="none" stroke="#111" stroke-width=".8"/></svg>
<div class="sbtn" style="left:403px;top:389.400px;width:44.700px;height:21.900px;border-radius:2px"></div>
<svg style="left:409px;top:394.700px" width="9.400" height="11" viewBox="0 0 9.400 11"><path d="M.5 .500h5.600l2.800 2.800v7.200h-8.400z" fill="#fdfdfd" stroke="#a6a6a6" stroke-width=".9" stroke-linejoin="round"/><path d="M6.100 .500v2.800h2.800" fill="none" stroke="#a6a6a6" stroke-width=".8"/></svg>
<div class="t" style="left:422.600px;top:395.100px;color:#222">Page</div>
<div class="box" style="left:403px;top:419.400px;width:544.500px;height:22.200px;border-color:#e2e2e2"></div>
<svg style="left:407.800px;top:424.300px" width="12.400" height="12.400" viewBox="0 0 16 16"><path d="M1 2.700h6l.9 1.500h7.100v9.100h-14z" fill="#b2b2b2"/><path d="M1 2.500h6.200l.9 1.700v1.300h-7.100z" fill="#7c7c7c"/><path d="M8 4.200h7v1.800h-7z" fill="#9c9c9c"/></svg>
<div class="t" style="left:423.700px;top:424.800px;color:#222">Articles, Articles <span style="color:#7d7d7d">[131]</span></div>
<div class="hr" style="top:466.800px"></div>
<div class="lbl" style="top:479.200px">Recursive</div>
<div class="box" style="left:403.300px;top:501.200px;width:152px;height:22.500px;border-radius:2px"></div>
<div class="t" style="left:411.200px;top:507.200px;font-size:8.600px;color:#333">Infinite</div>
<svg style="left:542.800px;top:510.800px" width="6.400" height="4.600" viewBox="0 0 6.400 4.600"><path d="M.7 .800l2.500 2.600 2.500-2.600" fill="none" stroke="#111" stroke-width="1.500"/></svg>
<svg style="left:896.900px;top:543.600px" width="9.400" height="9.400" viewBox="0 0 9.400 9.400"><rect x=".4" y=".400" width="8.600" height="8.600" fill="#e9e9e9" stroke="#c2c2c2" stroke-width=".8"/><rect x=".4" y=".400" width="8.600" height="1.800" fill="#c9c9c9"/></svg>
<div class="t" style="left:910.700px;top:542px;color:#111"><b>Page Content</b> <span style="color:#666">[1298]</span></div>
<svg style="left:1014px;top:630px" width="10" height="10" viewBox="0 0 10 10"><path d="M9.500 1l-8.500 8.500M9.500 4l-5.500 5.500M9.500 7l-2.500 2.500" stroke="#9a9a9a" stroke-width=".8"/></svg>
</div>
</body>
</html>
